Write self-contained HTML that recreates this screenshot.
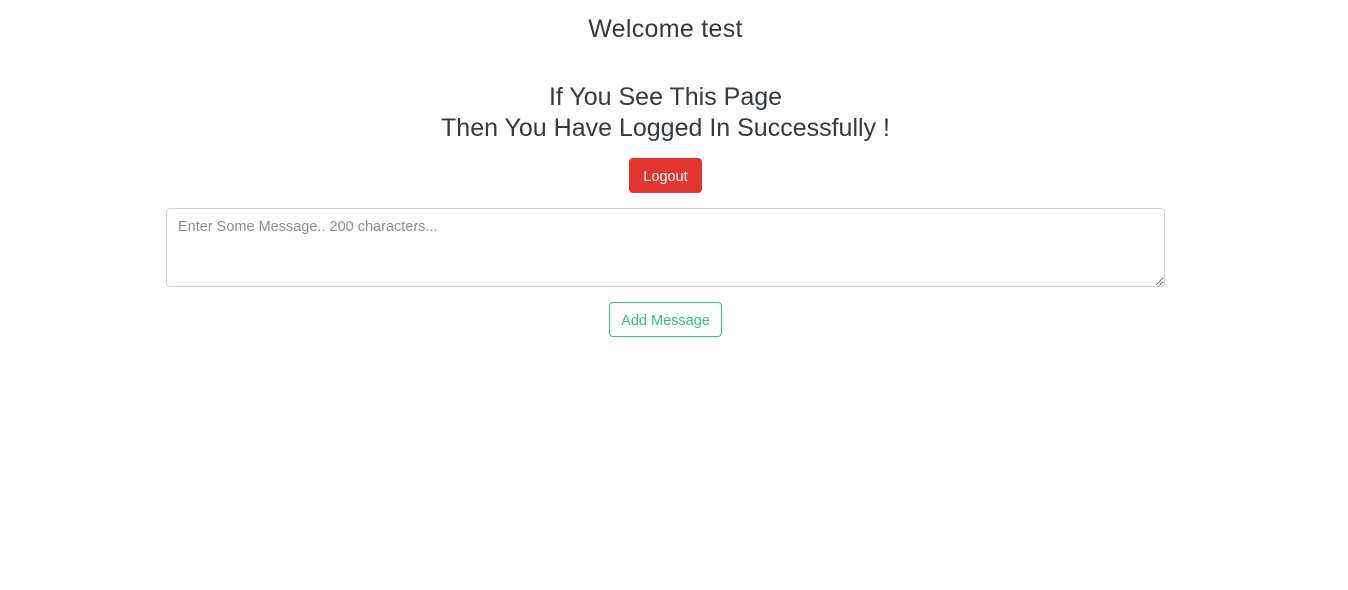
<!DOCTYPE html>
<html>
<head>
<meta charset="utf-8">
<style>
  html,body{margin:0;padding:0;background:#fff;width:1348px;height:590px;overflow:hidden;}
  body{font-family:"Liberation Sans",sans-serif;color:#343a40;}
  .t{position:absolute;left:0;width:1331px;text-align:center;font-size:25px;line-height:31px;}
  .btn{position:absolute;box-sizing:border-box;border-radius:4px;font-size:14.5px;display:flex;align-items:center;justify-content:center;padding-top:2px;}
  textarea{position:absolute;left:166px;top:208px;width:999px;height:79px;box-sizing:border-box;border:1px solid #ced4da;border-radius:4px;padding:10px 11px;font-family:"Liberation Sans",sans-serif;font-size:14.5px;resize:vertical;margin:0;}
  textarea::placeholder{color:#868e96;}
</style>
</head>
<body>
  <div class="t" style="top:14px;letter-spacing:0.3px;">Welcome test</div>
  <div class="t" style="top:82px;">If You See This Page</div>
  <div class="t" style="top:113px;">Then You Have Logged In Successfully !</div>
  <div class="btn" style="left:629px;top:158px;width:73px;height:35px;background:#e3342f;color:#fff;">Logout</div>
  <textarea placeholder="Enter Some Message.. 200 characters..."></textarea>
  <div class="btn" style="left:609px;top:302px;width:113px;height:35px;border:1px solid #38c172;color:#38c172;background:#fff;">Add Message</div>
</body>
</html>
